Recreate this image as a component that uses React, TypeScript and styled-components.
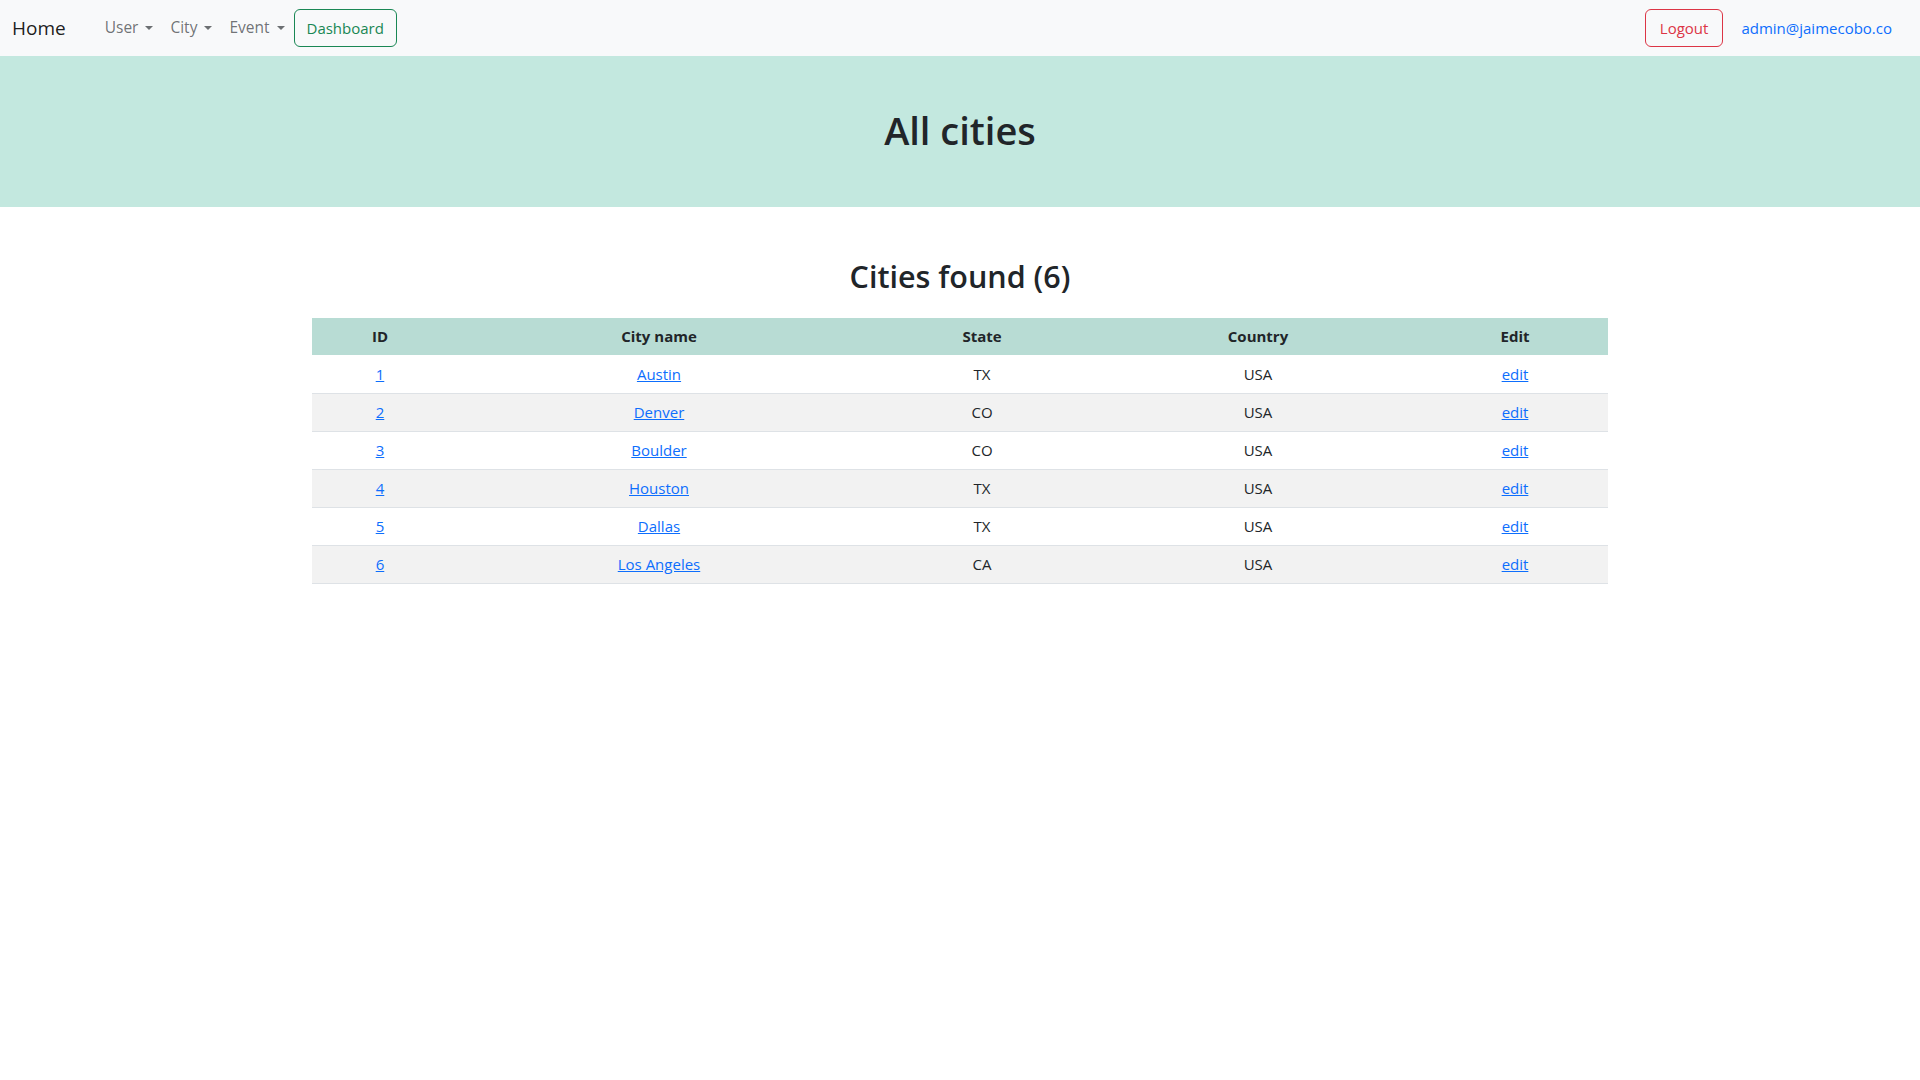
import React from "react";
import styled, { createGlobalStyle } from "styled-components";

const GlobalStyle = createGlobalStyle`
  * { box-sizing: border-box; }
  body {
    margin: 0;
    font-family: "Open Sans", "Noto Sans", sans-serif;
    font-size: 16px;
    line-height: 1.5;
    color: #212529;
    background: #fff;
  }
`;

const Navbar = styled.nav`
  display: flex;
  align-items: center;
  height: 56px;
  padding: 0 12px;
  background: #f8f9fa;
`;

const Brand = styled.a`
  font-size: 19px;
  line-height: 30px;
  color: rgba(0, 0, 0, 0.9);
  text-decoration: none;
  margin-right: 31px;
`;

const NavList = styled.div`
  display: flex;
  align-items: center;
`;

const NavLink = styled.a`
  display: flex;
  align-items: center;
  padding: 8px 9px 8px 8px;
  font-size: 15.5px;
  color: rgba(33, 37, 41, 0.65);
  text-decoration: none;
  cursor: pointer;

  &::after {
    content: "";
    display: inline-block;
    margin-left: 7px;
    border-top: 4.5px solid currentColor;
    border-left: 4px solid transparent;
    border-right: 4px solid transparent;
  }
`;

const OutlineButton = styled.button<{ $color: string; $padX: number }>`
  font-family: inherit;
  font-size: 15px;
  line-height: 24px;
  padding: 6px ${(p) => p.$padX}px;
  height: 38px;
  background: transparent;
  color: ${(p) => p.$color};
  border: 1px solid ${(p) => p.$color};
  border-radius: 6px;
  cursor: pointer;
`;

const RightGroup = styled.div`
  margin-left: auto;
  display: flex;
  align-items: center;
  gap: 10px;
  padding-right: 8px;
`;

const EmailLink = styled.a`
  padding: 8px;
  font-size: 15px;
  color: #0d6efd;
  text-decoration: none;
`;

const Hero = styled.header`
  background: #c3e8df;
  padding: 51px 12px 54px;
  text-align: center;
`;

const HeroTitle = styled.h1`
  margin: 0;
  font-size: 38px;
  font-weight: 600;
  line-height: 46px;
  color: #212529;
`;

const Container = styled.main`
  max-width: 1320px;
  margin: 0 auto;
  padding: 51px 12px 0;
`;

const SectionTitle = styled.h2`
  margin: 0 0 24px;
  font-size: 30.5px;
  font-weight: 600;
  line-height: 36px;
  text-align: center;
`;

const Table = styled.table`
  width: 100%;
  border-collapse: collapse;
  table-layout: fixed;
  font-size: 15px;
`;

const Col = styled.col<{ $w: number }>`
  width: ${(p) => p.$w}px;
`;

const Th = styled.th`
  height: 37px;
  padding: 0 8px;
  background: #b8dcd4;
  font-weight: 700;
  text-align: center;
  vertical-align: middle;
`;

const Row = styled.tr<{ $striped: boolean }>`
  background: ${(p) => (p.$striped ? "#f2f2f2" : "#ffffff")};
  border-bottom: 1px solid #dee2e6;
`;

const Td = styled.td`
  height: 38px;
  padding: 0 8px;
  text-align: center;
  vertical-align: middle;
`;

const CellLink = styled.a`
  color: #0d6efd;
  text-decoration: underline;
`;

const cities = [
  { id: 1, name: "Austin", state: "TX", country: "USA" },
  { id: 2, name: "Denver", state: "CO", country: "USA" },
  { id: 3, name: "Boulder", state: "CO", country: "USA" },
  { id: 4, name: "Houston", state: "TX", country: "USA" },
  { id: 5, name: "Dallas", state: "TX", country: "USA" },
  { id: 6, name: "Los Angeles", state: "CA", country: "USA" },
];

export default function App() {
  return (
    <>
      <GlobalStyle />
      <Navbar>
        <Brand href="#">Home</Brand>
        <NavList>
          <NavLink>User</NavLink>
          <NavLink>City</NavLink>
          <NavLink>Event</NavLink>
          <OutlineButton $color="#198754" $padX={12}>
            Dashboard
          </OutlineButton>
        </NavList>
        <RightGroup>
          <OutlineButton $color="#dc3545" $padX={14}>
            Logout
          </OutlineButton>
          <EmailLink href="#">admin@jaimecobo.co</EmailLink>
        </RightGroup>
      </Navbar>
      <Hero>
        <HeroTitle>All cities</HeroTitle>
      </Hero>
      <Container>
        <SectionTitle>Cities found ({cities.length})</SectionTitle>
        <Table>
          <colgroup>
            <Col $w={136} />
            <Col $w={422} />
            <Col $w={224} />
            <Col $w={328} />
            <Col $w={186} />
          </colgroup>
          <thead>
            <tr>
              <Th>ID</Th>
              <Th>City name</Th>
              <Th>State</Th>
              <Th>Country</Th>
              <Th>Edit</Th>
            </tr>
          </thead>
          <tbody>
            {cities.map((c, i) => (
              <Row key={c.id} $striped={i % 2 === 1}>
                <Td>
                  <CellLink href="#">{c.id}</CellLink>
                </Td>
                <Td>
                  <CellLink href="#">{c.name}</CellLink>
                </Td>
                <Td>{c.state}</Td>
                <Td>{c.country}</Td>
                <Td>
                  <CellLink href="#">edit</CellLink>
                </Td>
              </Row>
            ))}
          </tbody>
        </Table>
      </Container>
    </>
  );
}
